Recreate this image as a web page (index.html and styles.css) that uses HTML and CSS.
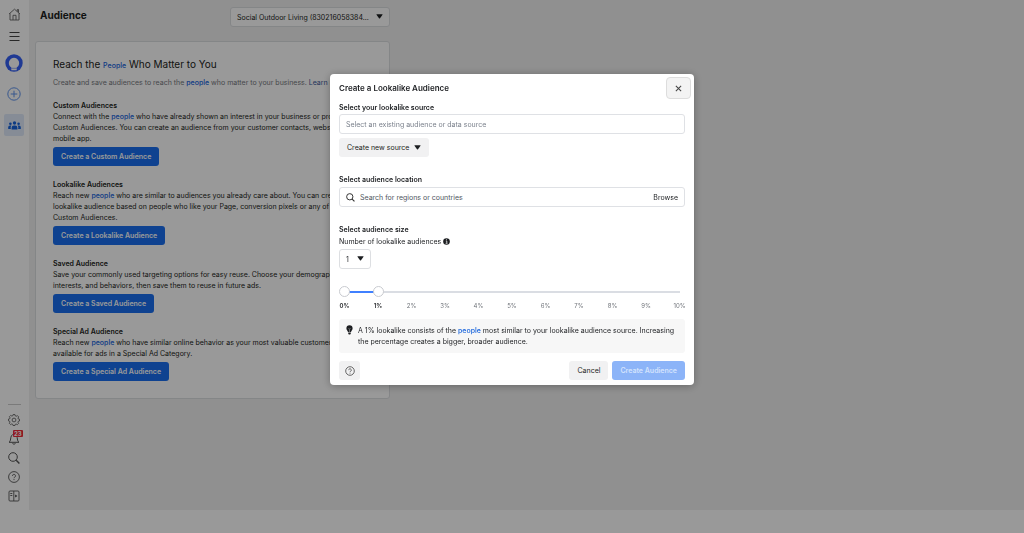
FILE: index.html
```html
<!DOCTYPE html>
<html lang="en">
<head>
<meta charset="utf-8">
<meta name="viewport" content="width=device-width, initial-scale=1">
<title>Audience</title>
<link rel="stylesheet" href="styles.css">
</head>
<body>
<div class="app">
  <nav class="rail" aria-label="Main">
    <div class="rail-group rail-top">
      <a class="rail-item" href="#" aria-label="Home"><svg width="13" height="13" viewBox="0 0 13 13" fill="none" stroke="#666" stroke-width=".9"><path d="M1 6 6.5 1.2 12 6M2 5.3V12h9V5.3M9.3 3.5V1.5h1.2v3M5 12V7.3h3V12"/></svg></a>
      <button class="rail-item" type="button" aria-label="Menu"><svg width="11" height="11" viewBox="0 0 11 11" stroke="#444" stroke-width="1.2"><path d="M.5 1.5h10M.5 5.5h10M.5 9.5h10"/></svg></button>
      <a class="rail-item rail-account" href="#" aria-label="Account"><svg width="18" height="18" viewBox="0 0 18 18"><circle cx="9" cy="9" r="8.7" fill="#3460f5"/><path d="M6.300 16.200V13.500a5.200 5.200 0 1 1 5.400 0v2.700z" fill="#fff"/><path d="M6 14.300h6" stroke="#7d98f4" stroke-width=".8"/></svg></a>
      <button class="rail-item rail-create" type="button" aria-label="Create"><svg width="14" height="14" viewBox="0 0 14 14" fill="none" stroke="#5f93ec" stroke-width="1"><circle cx="7" cy="7" r="6.2"/><path d="M7 3.7v6.6M3.7 7h6.6"/></svg></button>
      <a class="rail-item rail-active" href="#" aria-label="Audiences"><svg width="13" height="9" viewBox="0 0 13 9" fill="#1763dc"><circle cx="6.5" cy="2" r="1.7"/><circle cx="2.4" cy="2.7" r="1.3"/><circle cx="10.6" cy="2.7" r="1.3"/><path d="M3.6 8.5V6.7a2.3 2.3 0 0 1 2.3-2.3h1.2a2.3 2.3 0 0 1 2.3 2.3v1.8zM.2 8V6.3a1.8 1.8 0 0 1 1.8-1.8h1.4A3.4 3.4 0 0 0 2.9 8zM12.8 8V6.3A1.8 1.8 0 0 0 11 4.5H9.6A3.4 3.4 0 0 1 10.1 8z"/></svg></a>
    </div>
    <div class="rail-group rail-bottom">
      <button class="rail-item" type="button" aria-label="Settings"><svg width="12" height="12" viewBox="0 0 12 12" fill="none" stroke="#666" stroke-width=".9" stroke-linejoin="round"><path d="M5 .6h2l.3 1.3.9.4 1.2-.7 1.3 1.3-.7 1.2.4.9 1.1.2v1.8l-1.2.3-.4.9.7 1.2-1.3 1.3-1.2-.7-.9.4L7 11.5H5l-.3-1.2-.9-.4-1.2.7-1.3-1.3.7-1.2-.4-.9-1.1-.3V5l1.2-.2.4-.9-.7-1.2 1.3-1.3 1.2.7.9-.4z"/><circle cx="6" cy="6" r="1.9"/></svg></button>
      <button class="rail-item rail-alerts" type="button" aria-label="Notifications"><svg width="12" height="12" viewBox="0 0 12 12" fill="none" stroke="#555" stroke-width="1" stroke-linejoin="round"><path d="M1 9.3c1-.7 1.4-1.7 1.6-3.3C2.900 3.500 3.600 1.300 6 1.300S9.100 3.500 9.400 6c.2 1.600.6 2.600 1.600 3.300zM4.600 10.300c.4 1.200 2.400 1.200 2.800 0"/></svg><span class="badge">23</span></button>
      <button class="rail-item" type="button" aria-label="Search"><svg width="12" height="12" viewBox="0 0 12 12" fill="none" stroke="#555" stroke-width="1"><circle cx="5" cy="5" r="4.300"/><path d="m8.200 8.200 3.200 3.200" stroke-width="1.400"/></svg></button>
      <button class="rail-item" type="button" aria-label="Help"><svg width="12" height="12" viewBox="0 0 12 12" fill="none" stroke="#555" stroke-width=".9"><circle cx="6" cy="6" r="5.400"/><path d="M4.500 4.900a1.500 1.500 0 1 1 2.300 1.200q-.8.400-.8 1.100M6 8.100v1"/></svg></button>
      <button class="rail-item" type="button" aria-label="Toggle panel"><svg width="12" height="12" viewBox="0 0 12 12" fill="none" stroke="#555" stroke-width=".9"><rect x="1" y="1" width="10" height="10" rx="1"/><path d="M5.800 1v10M2.300 3.500h2M2.300 5.500h2"/><path d="M7.200 4.500 9.400 6 7.200 7.500z" fill="#444" stroke="none"/></svg></button>
    </div>
  </nav>
  <main class="page">
    <header class="page-head">
      <h1 class="page-title">Audience</h1>
      <span class="picker account-picker">
        <select class="picker-input" aria-label="Ad account"><option>Social Outdoor Living (830216058384...</option></select>
        <svg class="caret" width="7" height="5" viewBox="0 0 7 5"><path d="M.8.300h5.400q.6 0 .3.500L4 4.200q-.5.500-1 0L.5.800Q.2.300.8.300z" fill="#1c1e21"/></svg>
      </span>
    </header>
    <section class="card">
      <h2 class="card-title">Reach the <a class="link link-small" href="#">People</a> Who Matter to You</h2>
      <p class="card-intro">Create and save audiences to reach the <a class="link" href="#">people</a> who matter to your business. <a class="link learn" href="#">Learn more.</a></p>
      <section class="audience">
        <h3 class="audience-title">Custom Audiences</h3>
        <p class="audience-text">Connect with the <a class="link" href="#">people</a> who have already shown an interest in your business or product with<br>Custom Audiences. You can create an audience from your customer contacts, website traffic or<br>mobile app.</p>
        <button class="btn btn-primary" type="button">Create a Custom Audience</button>
      </section>
      <section class="audience">
        <h3 class="audience-title">Lookalike Audiences</h3>
        <p class="audience-text">Reach new <a class="link" href="#">people</a> who are similar to audiences you already care about. You can create a<br>lookalike audience based on people who like your Page, conversion pixels or any of your existing<br>Custom Audiences.</p>
        <button class="btn btn-primary" type="button">Create a Lookalike Audience</button>
      </section>
      <section class="audience">
        <h3 class="audience-title">Saved Audience</h3>
        <p class="audience-text">Save your commonly used targeting options for easy reuse. Choose your demographics,<br>interests, and behaviors, then save them to reuse in future ads.</p>
        <button class="btn btn-primary" type="button">Create a Saved Audience</button>
      </section>
      <section class="audience">
        <h3 class="audience-title">Special Ad Audience</h3>
        <p class="audience-text">Reach new <a class="link" href="#">people</a> who have similar online behavior as your most valuable customers,<br>available for ads in a Special Ad Category.</p>
        <button class="btn btn-primary" type="button">Create a Special Ad Audience</button>
      </section>
    </section>
  </main>
</div>

<div class="backdrop">
  <form class="dialog" role="dialog" aria-modal="true" aria-labelledby="dialog-title">
    <header class="dialog-head">
      <h2 class="dialog-title" id="dialog-title">Create a Lookalike Audience</h2>
      <button class="close" type="button" aria-label="Close"><svg width="7" height="7" viewBox="0 0 8 8" stroke="#444" stroke-width="1.200"><path d="m1 1 6 6M7 1 1 7"/></svg></button>
    </header>
    <div class="dialog-body">
      <div class="field">
        <label class="label" for="source">Select your lookalike source</label>
        <input class="box text-input source" id="source" type="text" placeholder="Select an existing audience or data source">
        <button class="btn btn-plain btn-source" type="button">Create new source <svg width="7" height="5" viewBox="0 0 7 5"><path d="M.8.300h5.400q.6 0 .3.500L4 4.200q-.5.500-1 0L.5.800Q.2.300.8.300z" fill="#1c1e21"/></svg></button>
      </div>
      <div class="field">
        <label class="label" for="location">Select audience location</label>
        <div class="box search">
          <svg width="9" height="9" viewBox="0 0 10 10" fill="none" stroke="#333" stroke-width="1.100"><circle cx="4.200" cy="4.200" r="3.500"/><path d="m6.800 6.800 2.600 2.600" stroke-width="1.300"/></svg>
          <input class="text-input search-input" id="location" type="text" placeholder="Search for regions or countries">
          <button class="browse" type="button">Browse</button>
        </div>
      </div>
      <div class="field">
        <h3 class="label">Select audience size</h3>
        <div class="count-label"><label for="count">Number of lookalike audiences</label><svg width="7" height="7" viewBox="0 0 7 7"><circle cx="3.500" cy="3.500" r="3.300" fill="#1c1e21"/><path d="M2.800 3h1v2.300M2.600 5.300h1.900M3.100 1.700h.9" stroke="#fff" stroke-width=".7" fill="none"/></svg></div>
        <span class="picker count-picker">
          <select class="picker-input" id="count"><option>1</option><option>2</option><option>3</option></select>
          <svg class="caret" width="7" height="5" viewBox="0 0 7 5"><path d="M.8.300h5.400q.6 0 .3.500L4 4.200q-.5.500-1 0L.5.800Q.2.300.8.300z" fill="#1c1e21"/></svg>
        </span>
      </div>
      <div class="range">
        <input class="slider slider-low" type="range" min="0" max="10" value="0" aria-label="Smallest percentage">
        <input class="slider slider-high" type="range" min="0" max="10" value="1" aria-label="Largest percentage">
      </div>
      <div class="ticks">
        <span class="tick tick-on">0%</span><span class="tick tick-on">1%</span><span class="tick">2%</span><span class="tick">3%</span><span class="tick">4%</span><span class="tick">5%</span><span class="tick">6%</span><span class="tick">7%</span><span class="tick">8%</span><span class="tick">9%</span><span class="tick">10%</span>
      </div>
      <div class="notice">
        <svg width="7" height="10" viewBox="0 0 7 10" fill="#1c1e21"><path d="M3.500.3a3.100 3.100 0 0 1 3.100 3.100C6.600 5 5.300 5.500 5 7H2C1.700 5.500.4 5 .4 3.400A3.100 3.100 0 0 1 3.500.3zM2.200 7.600h2.600v.8L4.200 9.500H2.800l-.6-1.100z"/><path d="M2.500 3.200 3.500 4.200l1-1M3.500 4.200V7" stroke="#bbb" stroke-width=".5" fill="none"/></svg>
        <p class="notice-text">A 1% lookalike consists of the <a class="link" href="#">people</a> most similar to your lookalike audience source. Increasing the percentage creates a bigger, broader audience.</p>
      </div>
      <footer class="dialog-foot">
        <button class="btn btn-plain btn-help" type="button" aria-label="Help"><svg width="10" height="10" viewBox="0 0 10 10" fill="none" stroke="#444" stroke-width=".8"><circle cx="5" cy="5" r="4.300"/><path d="M3.700 4.100a1.300 1.300 0 1 1 2 1.100q-.7.300-.7.900M5 6.800v.8"/></svg></button>
        <div class="actions">
          <button class="btn btn-plain" type="button">Cancel</button>
          <button class="btn btn-primary btn-submit" type="submit" disabled>Create Audience</button>
        </div>
      </footer>
    </div>
  </form>
</div>
</body>
</html>
```
FILE: styles.css
```css
* { box-sizing: border-box; }

body {
  margin: 0;
  min-height: 100vh;
  display: flex;
  flex-direction: column;
  padding-bottom: 23px;
  background: #fff;
  color: #1c1e21;
  font: 7px/11px Inter, Roboto, sans-serif;
}

h1, h2, h3, p { margin: 0; }
button, input, select { font: inherit; color: inherit; }
button { border: 0; padding: 0; background: none; cursor: pointer; }
svg { display: block; flex: none; }

.app { flex: 1; display: flex; background: #f0f0f0; }

/* Side rail */
.rail {
  flex: none;
  width: 29px;
  display: flex;
  flex-direction: column;
  justify-content: space-between;
  padding-right: 1px;
  background: #fff;
}
.rail-group { display: flex; flex-direction: column; align-items: center; }
.rail-item { display: flex; align-items: center; justify-content: center; width: 20px; height: 20px; }
.rail-top { padding-top: 4px; gap: 2px; }
.rail-account { height: 28px; margin-top: 1px; }
.rail-create { height: 30px; }
.rail-active { height: 22px; margin-top: 3px; border-radius: 2px; background: #e0eafa; }
.rail-bottom { padding-bottom: 5px; }
.rail-bottom .rail-item { height: 19px; }
.rail-bottom::before { content: ""; width: 13px; height: 1px; margin-bottom: 5px; background: #ccc; }
.rail-alerts { position: relative; }
.badge {
  position: absolute;
  top: 1px;
  left: 9px;
  padding: 0 1px;
  border-radius: 1px;
  background: #f02838;
  color: #fff;
  font-size: 6px;
  font-weight: 700;
  line-height: 7px;
}

/* Page */
.page { flex: 1; padding: 7px 6px; }
.page-head { display: flex; align-items: center; height: 20px; padding-left: 5px; }
.page-title { flex: 0 0 190px; margin-bottom: 5px; font-size: 10px; line-height: 16px; }

.picker { position: relative; display: inline-flex; }
.picker-input {
  appearance: none;
  width: 100%;
  height: 20px;
  padding: 0 6px;
  border: 1px solid #dddfe2;
  border-radius: 3px;
  background: #fff;
}
.caret { position: absolute; right: 7px; top: 7px; pointer-events: none; }
.account-picker { width: 160px; }

.card {
  width: 355px;
  max-width: 100%;
  margin-top: 14px;
  padding: 15px 17px 17px;
  border: 1px solid #dddfe2;
  border-radius: 3px;
  background: #fff;
  white-space: nowrap;
}
.card-title { font-size: 10px; font-weight: 400; line-height: 14px; }
.card-intro { margin-top: 4px; color: #76797e; }
.link { color: #1763dc; font-weight: 500; text-decoration: none; }
.link-small { font-size: 7px; }
.learn { color: #385898; font-weight: 400; }
.audience { display: flex; flex-direction: column; align-items: flex-start; margin-top: 12px; }
.audience + .audience { margin-top: 13px; }
.audience-title { font-size: 7px; font-weight: 600; line-height: 11px; }
.audience .btn { margin-top: 3px; }

.btn {
  display: inline-flex;
  align-items: center;
  justify-content: center;
  height: 19px;
  padding: 0 8px;
  border-radius: 3px;
  font-size: 7px;
  line-height: 11px;
  white-space: nowrap;
}
.btn-primary { background: #1a6ff0; color: #fff; font-weight: 600; }
.btn-plain { background: #f1f1f2; }

/* Dialog */
.backdrop {
  position: fixed;
  inset: 0;
  display: flex;
  align-items: flex-start;
  justify-content: center;
  padding-top: 74px;
  background: rgba(0, 0, 0, .4);
}
.dialog {
  width: 364px;
  max-width: 100%;
  border-radius: 4px;
  background: #fff;
  box-shadow: 0 1px 8px rgba(0, 0, 0, .3);
}
.dialog-head { display: flex; align-items: center; justify-content: space-between; padding: 3px 3px 0 9px; }
.dialog-title { font-size: 8px; font-weight: 600; line-height: 12px; }
.close {
  display: flex;
  align-items: center;
  justify-content: center;
  width: 25px;
  height: 22px;
  border: 1px solid #ddd;
  border-radius: 4px;
  background: #f3f3f3;
}
.dialog-body { padding: 3px 9px 5px; }
.field { display: flex; flex-direction: column; align-items: flex-start; }
.field + .field { margin-top: 17px; }
.label { font-size: 7px; font-weight: 600; line-height: 11px; }
.box { width: 100%; height: 20px; border: 1px solid #dfe1e5; border-radius: 3px; background: #fff; }
.text-input { outline: 0; }
.text-input::placeholder { color: #7b818c; opacity: 1; }
.source { margin-top: 1px; padding: 0 6px; }
.btn-source { margin-top: 4px; gap: 5px; }
.search { display: flex; align-items: center; gap: 5px; margin-top: 2px; padding: 0 6px; }
.search-input { flex: 1; min-width: 0; height: 16px; padding: 0; border: 0; }
.search-input::placeholder { color: #50565e; }
.count-label { display: flex; align-items: center; gap: 2px; margin-top: 1px; }
.count-picker { width: 32px; margin-top: 2px; }

.range { position: relative; height: 11px; margin-top: 17px; }
.slider {
  position: absolute;
  inset: 0;
  appearance: none;
  width: 100%;
  height: 11px;
  margin: 0;
  background: none;
  pointer-events: none;
}
.slider-low {
  background: linear-gradient(90deg, #4080ff 10%, #dadde3 10%) center / calc(100% - 11px) 2px no-repeat;
}
.slider::-webkit-slider-thumb {
  appearance: none;
  width: 11px;
  height: 11px;
  border: 1px solid #c8cacf;
  border-radius: 50%;
  background: #fff;
  pointer-events: auto;
}
.ticks { display: flex; justify-content: space-between; margin-top: 3px; font-size: 6px; color: #70747a; }
.tick { display: flex; justify-content: center; width: 11px; }
.tick-on { color: #1c1e21; font-weight: 600; }

.notice {
  display: flex;
  gap: 5px;
  margin-top: 8px;
  padding: 6px 7px;
  border-radius: 3px;
  background: #f7f7f7;
}
.dialog-foot { display: flex; justify-content: space-between; margin-top: 8px; }
.actions { display: flex; gap: 4px; }
.btn-help { width: 21px; padding: 0; }
.btn-submit:disabled { background: #8cb4f8; color: #d3e3fd; }
```
